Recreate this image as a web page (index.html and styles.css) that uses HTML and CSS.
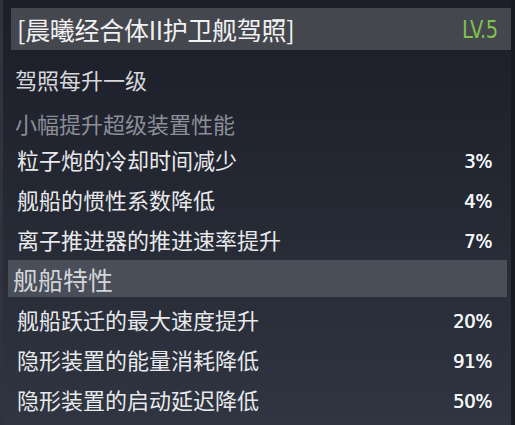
FILE: index.html
```html
<!DOCTYPE html>
<html lang="zh-CN">
<head>
<meta charset="utf-8">
<title>晨曦经合体II护卫舰驾照</title>
<link rel="stylesheet" href="styles.css">
</head>
<body>
<div class="panel">
  <div class="head-bar">
    <span class="title">[晨曦经合体II护卫舰驾照]</span>
    <span class="level">LV.5</span>
  </div>
  <div class="note">驾照每升一级</div>
  <div class="sub">小幅提升超级装置性能</div>
  <div class="list">
    <div class="row"><span class="label">粒子炮的冷却时间减少</span><span class="val">3%</span></div>
    <div class="row"><span class="label">舰船的惯性系数降低</span><span class="val">4%</span></div>
    <div class="row"><span class="label">离子推进器的推进速率提升</span><span class="val">7%</span></div>
  </div>
  <div class="sec-bar">舰船特性</div>
  <div class="list list-2">
    <div class="row"><span class="label">舰船跃迁的最大速度提升</span><span class="val">20%</span></div>
    <div class="row"><span class="label">隐形装置的能量消耗降低</span><span class="val">91%</span></div>
    <div class="row"><span class="label">隐形装置的启动延迟降低</span><span class="val">50%</span></div>
  </div>
</div>
</body>
</html>
```

FILE: styles.css
```css
html, body {
  margin: 0;
  padding: 0;
  background: #1c1e28;
}

.panel {
  width: 515px;
  height: 425px;
  box-sizing: border-box;
  padding: 8px 0 0 8px;
  border-left: 3px solid #30333d;
  border-right: 4px solid #181a22;
  background: linear-gradient(180deg, #1c1e28 0%, #242833 45%, #2f3541 100%);
  font-family: "Noto Sans CJK SC", "Noto Sans", sans-serif;
  color: #e9eaec;
  overflow: hidden;
}

.head-bar {
  height: 42px;
  display: flex;
  align-items: center;
  justify-content: space-between;
  background: #45474f;
  padding: 0 13px 0 6px;
}

.title {
  font-size: 25px;
  line-height: 42px;
  color: #f1f1f1;
  letter-spacing: -0.3px;
}

.level {
  font-family: "DejaVu Sans Condensed", "DejaVu Sans", sans-serif;
  font-stretch: condensed;
  font-size: 24px;
  line-height: 42px;
  color: #7fc24b;
  letter-spacing: -0.5px;
  padding-top: 1px;
  transform: scaleX(0.9);
  transform-origin: right center;
}

.note {
  margin-top: 14px;
  padding-left: 4px;
  font-size: 22px;
  line-height: 30px;
  height: 30px;
  color: #d6d8db;
}

.sub {
  margin-top: 14px;
  padding-left: 4px;
  font-size: 22px;
  line-height: 30px;
  height: 30px;
  color: #8a8f98;
}

.list {
  display: flex;
  flex-direction: column;
  padding: 1px 19px 0 6px;
}

.list-2 {
  padding-top: 2px;
}

.row {
  height: 40px;
  display: flex;
  align-items: center;
  justify-content: space-between;
}

.label {
  font-size: 22px;
  line-height: 40px;
  color: #e8e9eb;
}

.val {
  font-family: "DejaVu Sans Condensed", "DejaVu Sans", sans-serif;
  font-stretch: condensed;
  font-weight: 400;
  font-size: 20px;
  line-height: 40px;
  color: #f4f5f6;
  padding-top: 3px;
  letter-spacing: -0.3px;
  text-shadow: 0.4px 0 0 #f4f5f6;
}

.sec-bar {
  margin: 1px 4px 0 -3px;
  height: 37px;
  padding: 2px 0 0 5px;
  box-sizing: border-box;
  background: #4a4e59;
  font-size: 25px;
  line-height: 35px;
  color: #d2d5d9;
}
```
